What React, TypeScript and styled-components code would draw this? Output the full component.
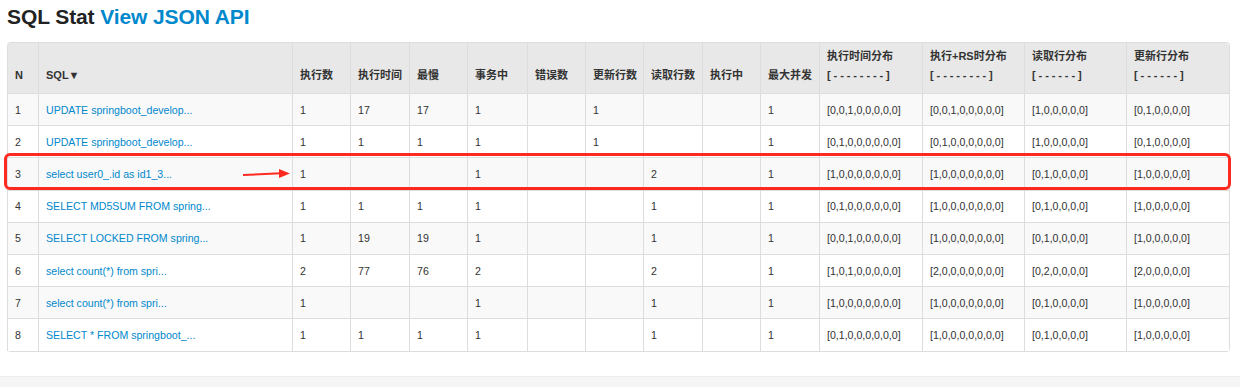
import React from 'react';
import styled, { createGlobalStyle } from 'styled-components';

type Row = {
  sql: string;
  execCount: string;
  execTime: string;
  slowest: string;
  inTx: string;
  errors: string;
  updated: string;
  fetched: string;
  running: string;
  concurrent: string;
  timeHisto: string;
  rsHisto: string;
  fetchHisto: string;
  updateHisto: string;
};

const rows: Row[] = [
  { sql: 'UPDATE springboot_develop...', execCount: '1', execTime: '17', slowest: '17', inTx: '1', errors: '', updated: '1', fetched: '', running: '', concurrent: '1', timeHisto: '[0,0,1,0,0,0,0,0]', rsHisto: '[0,0,1,0,0,0,0,0]', fetchHisto: '[1,0,0,0,0,0]', updateHisto: '[0,1,0,0,0,0]' },
  { sql: 'UPDATE springboot_develop...', execCount: '1', execTime: '1', slowest: '1', inTx: '1', errors: '', updated: '1', fetched: '', running: '', concurrent: '1', timeHisto: '[0,1,0,0,0,0,0,0]', rsHisto: '[0,1,0,0,0,0,0,0]', fetchHisto: '[1,0,0,0,0,0]', updateHisto: '[0,1,0,0,0,0]' },
  { sql: 'select user0_.id as id1_3...', execCount: '1', execTime: '', slowest: '', inTx: '1', errors: '', updated: '', fetched: '2', running: '', concurrent: '1', timeHisto: '[1,0,0,0,0,0,0,0]', rsHisto: '[1,0,0,0,0,0,0,0]', fetchHisto: '[0,1,0,0,0,0]', updateHisto: '[1,0,0,0,0,0]' },
  { sql: 'SELECT MD5SUM FROM spring...', execCount: '1', execTime: '1', slowest: '1', inTx: '1', errors: '', updated: '', fetched: '1', running: '', concurrent: '1', timeHisto: '[0,1,0,0,0,0,0,0]', rsHisto: '[1,0,0,0,0,0,0,0]', fetchHisto: '[0,1,0,0,0,0]', updateHisto: '[1,0,0,0,0,0]' },
  { sql: 'SELECT LOCKED FROM spring...', execCount: '1', execTime: '19', slowest: '19', inTx: '1', errors: '', updated: '', fetched: '1', running: '', concurrent: '1', timeHisto: '[0,0,1,0,0,0,0,0]', rsHisto: '[1,0,0,0,0,0,0,0]', fetchHisto: '[0,1,0,0,0,0]', updateHisto: '[1,0,0,0,0,0]' },
  { sql: 'select count(*) from spri...', execCount: '2', execTime: '77', slowest: '76', inTx: '2', errors: '', updated: '', fetched: '2', running: '', concurrent: '1', timeHisto: '[1,0,1,0,0,0,0,0]', rsHisto: '[2,0,0,0,0,0,0,0]', fetchHisto: '[0,2,0,0,0,0]', updateHisto: '[2,0,0,0,0,0]' },
  { sql: 'select count(*) from spri...', execCount: '1', execTime: '', slowest: '', inTx: '1', errors: '', updated: '', fetched: '1', running: '', concurrent: '1', timeHisto: '[1,0,0,0,0,0,0,0]', rsHisto: '[1,0,0,0,0,0,0,0]', fetchHisto: '[0,1,0,0,0,0]', updateHisto: '[1,0,0,0,0,0]' },
  { sql: 'SELECT * FROM springboot_...', execCount: '1', execTime: '1', slowest: '1', inTx: '1', errors: '', updated: '', fetched: '1', running: '', concurrent: '1', timeHisto: '[0,1,0,0,0,0,0,0]', rsHisto: '[1,0,0,0,0,0,0,0]', fetchHisto: '[0,1,0,0,0,0]', updateHisto: '[1,0,0,0,0,0]' },
];

const columns: { label: string; histo?: string; width: number }[] = [
  { label: 'N', width: 31 },
  { label: 'SQL▼', width: 254 },
  { label: '执行数', width: 58 },
  { label: '执行时间', width: 59 },
  { label: '最慢', width: 58 },
  { label: '事务中', width: 60 },
  { label: '错误数', width: 58 },
  { label: '更新行数', width: 58 },
  { label: '读取行数', width: 59 },
  { label: '执行中', width: 58 },
  { label: '最大并发', width: 59 },
  { label: '执行时间分布', histo: '[--------]', width: 103 },
  { label: '执行+RS时分布', histo: '[--------]', width: 102 },
  { label: '读取行分布', histo: '[------]', width: 102 },
  { label: '更新行分布', histo: '[------]', width: 103 },
];

const HIGHLIGHT_ROW = 2;
const HEAD_H = 50;
const ROW_H = 32.2;

const GlobalStyle = createGlobalStyle`
  body {
    margin: 0;
    background: #fff;
    font-family: "Liberation Sans", "Noto Sans CJK SC", Arial, sans-serif;
    color: #333;
  }
`;

const Page = styled.div`
  display: flex;
  flex-direction: column;
  height: 387px;
  overflow: hidden;
`;

const Content = styled.div`
  padding: 0 11px 0 7px;
`;

const Title = styled.h3`
  margin: 0;
  height: 42px;
  padding-top: 5px;
  box-sizing: border-box;
  font-size: 21px;
  line-height: 24px;
  font-weight: 700;
  color: #222;
  letter-spacing: -0.1px;
`;

const ApiLink = styled.a`
  color: #0088cc;
  text-decoration: none;
`;

const TableWrap = styled.div`
  position: relative;
`;

const Table = styled.table`
  width: 1222px;
  table-layout: fixed;
  border-collapse: separate;
  border-spacing: 0;
  border: 1px solid #dddddd;
  border-left: 0;
  border-radius: 4px;
  font-size: 11px;
`;

const Th = styled.th`
  height: ${HEAD_H}px;
  box-sizing: border-box;
  padding: 0 7px 8px;
  text-align: left;
  vertical-align: bottom;
  font-weight: 700;
  line-height: 19px;
  color: #333;
  background: #e8e8e8;
  border-left: 1px solid #dddddd;
  white-space: nowrap;

  &:first-child {
    border-top-left-radius: 4px;
  }
  &:last-child {
    border-top-right-radius: 4px;
  }
`;

const Dashes = styled.span`
  display: block;
  letter-spacing: 2.9px;
`;

const Tr = styled.tr<{ $striped: boolean }>`
  background: ${(p) => (p.$striped ? '#f9f9f9' : '#ffffff')};
`;

const Td = styled.td`
  height: ${ROW_H}px;
  box-sizing: border-box;
  padding: 0 7px;
  border-left: 1px solid #dddddd;
  border-top: 1px solid #dddddd;
  font-size: 10.6px;
  line-height: 16px;
  color: #333;
  white-space: nowrap;
  overflow: hidden;
`;

const SqlLink = styled.a`
  color: #0088cc;
  text-decoration: none;
`;

const Highlight = styled.div<{ $top: number }>`
  position: absolute;
  left: -3px;
  right: -2px;
  top: ${(p) => p.$top}px;
  height: 37px;
  border: 3px solid #ff2a1f;
  border-radius: 6px;
  box-sizing: border-box;
  pointer-events: none;
`;

const Arrow = styled.svg`
  position: absolute;
  left: 236px;
  top: 12px;
`;

const Footer = styled.div`
  margin-top: auto;
  height: 10px;
  background: #f5f5f5;
  border-top: 1px solid #eeeeee;
`;

export default function App() {
  const cells = (r: Row) => [
    r.execCount,
    r.execTime,
    r.slowest,
    r.inTx,
    r.errors,
    r.updated,
    r.fetched,
    r.running,
    r.concurrent,
    r.timeHisto,
    r.rsHisto,
    r.fetchHisto,
    r.updateHisto,
  ];

  return (
    <Page>
      <GlobalStyle />
      <Content>
        <Title>
          SQL Stat <ApiLink href="#">View JSON API</ApiLink>
        </Title>
        <TableWrap>
          <Table>
            <colgroup>
              {columns.map((c) => (
                <col key={c.label} style={{ width: c.width }} />
              ))}
            </colgroup>
            <thead>
              <tr>
                {columns.map((c) => (
                  <Th key={c.label}>
                    {c.label}
                    {c.histo && <Dashes>{c.histo}</Dashes>}
                  </Th>
                ))}
              </tr>
            </thead>
            <tbody>
              {rows.map((r, i) => (
                <Tr key={i} $striped={i % 2 === 0}>
                  <Td>{i + 1}</Td>
                  <Td>
                    <SqlLink href="#">{r.sql}</SqlLink>
                  </Td>
                  {cells(r).map((v, j) => (
                    <Td key={j}>{v}</Td>
                  ))}
                </Tr>
              ))}
            </tbody>
          </Table>
          <Highlight $top={HEAD_H + HIGHLIGHT_ROW * ROW_H - 3}>
            <Arrow width="50" height="12" viewBox="0 0 50 12">
              <path d="M0 7 L38 5.2" stroke="#ff2a1f" strokeWidth="2" fill="none" />
              <path d="M36 1 L47 5.5 L36 10 Z" fill="#ff2a1f" />
            </Arrow>
          </Highlight>
        </TableWrap>
      </Content>
      <Footer />
    </Page>
  );
}
